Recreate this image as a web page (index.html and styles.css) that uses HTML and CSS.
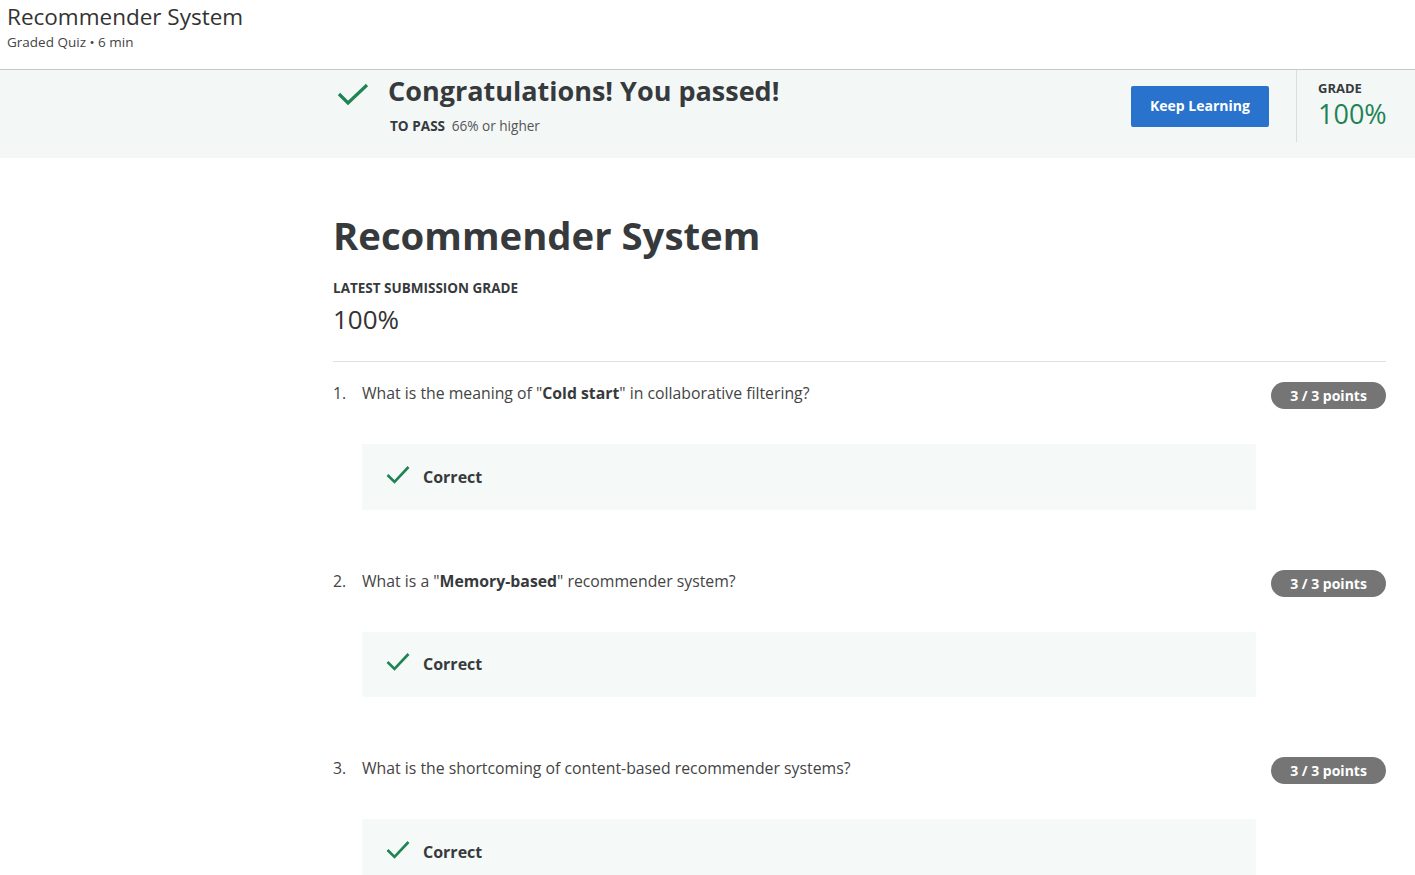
FILE: index.html
```html
<!DOCTYPE html>
<html>
<head>
<meta charset="utf-8">
<link rel="stylesheet" href="styles.css">
</head>
<body>
<header class="top">
  <div class="top-title">Recommender System</div>
  <div class="top-sub">Graded Quiz • 6 min</div>
</header>
<section class="banner">
  <div class="banner-main">
    <svg class="banner-check" viewBox="0 0 32 24" width="32" height="24"><path d="M2 12 L11 21 L30 3" fill="none" stroke="#1f8354" stroke-width="3.2"/></svg>
    <div class="banner-text">
      <div class="banner-title">Congratulations! You passed!</div>
      <div class="banner-pass"><b>TO PASS</b> 66% or higher</div>
    </div>
  </div>
  <button class="btn">Keep Learning</button>
  <div class="grade">
    <div class="grade-label">GRADE</div>
    <div class="grade-value">100%</div>
  </div>
</section>
<main class="content">
  <h1 class="title">Recommender System</h1>
  <div class="latest-label">LATEST SUBMISSION GRADE</div>
  <div class="latest-value">100%</div>
  <div class="rule"></div>

  <div class="question">
    <div class="q-row">
      <span class="q-num">1.</span>
      <span class="q-text">What is the meaning of "<b>Cold start</b>" in collaborative filtering?</span>
      <span class="pill">3 / 3 points</span>
    </div>
    <div class="correct">
      <svg viewBox="0 0 24 20" width="24" height="20"><path d="M1.5 10 L8.5 17 L22.5 2" fill="none" stroke="#1f8354" stroke-width="2.6"/></svg>
      <span>Correct</span>
    </div>
  </div>

  <div class="question">
    <div class="q-row">
      <span class="q-num">2.</span>
      <span class="q-text">What is a "<b>Memory-based</b>" recommender system?</span>
      <span class="pill">3 / 3 points</span>
    </div>
    <div class="correct">
      <svg viewBox="0 0 24 20" width="24" height="20"><path d="M1.5 10 L8.5 17 L22.5 2" fill="none" stroke="#1f8354" stroke-width="2.6"/></svg>
      <span>Correct</span>
    </div>
  </div>

  <div class="question">
    <div class="q-row">
      <span class="q-num">3.</span>
      <span class="q-text">What is the shortcoming of content-based recommender systems?</span>
      <span class="pill">3 / 3 points</span>
    </div>
    <div class="correct">
      <svg viewBox="0 0 24 20" width="24" height="20"><path d="M1.5 10 L8.5 17 L22.5 2" fill="none" stroke="#1f8354" stroke-width="2.6"/></svg>
      <span>Correct</span>
    </div>
  </div>
</main>
</body>
</html>
```

FILE: styles.css
```css
* { box-sizing: border-box; }
body {
  margin: 0;
  font-family: "Open Sans", "Liberation Sans", sans-serif;
  color: #373a3c;
  background: #fff;
  overflow: hidden;
  height: 875px;
}
.top {
  height: 70px;
  padding: 3px 7px 0;
  border-bottom: 1px solid #c8c8c8;
}
.top-title {
  font-size: 22.5px;
  line-height: 28px;
  color: #333;
}
.top-sub {
  font-size: 13.5px;
  line-height: 22px;
  color: #444;
}
.banner {
  height: 88px;
  background: #f3f8f7;
  display: flex;
  align-items: flex-start;
}
.banner-main {
  margin-left: 337px;
  flex: 1;
  display: flex;
  padding-top: 9px;
}
.banner-check { margin-top: 3px; }
.banner-text { margin-left: 19px; }
.banner-title {
  font-size: 27px;
  font-weight: 700;
  line-height: 20px;
  padding-top: 2px;
  color: #373a3c;
}
.banner-pass {
  font-size: 13.6px;
  margin-top: 15px;
  margin-left: 2px;
  color: #555;
}
.banner-pass b { color: #373a3c; margin-right: 3px; }
.btn {
  margin-top: 16px;
  width: 138px;
  height: 41px;
  background: #2a73cc;
  color: #fff;
  border: none;
  border-radius: 2px;
  font-family: inherit;
  font-weight: 700;
  font-size: 14px;
  line-height: 38px;
  padding: 0 0 2px;
}
.grade {
  margin-left: 27px;
  width: 119px;
  height: 72px;
  border-left: 1px solid #d9dede;
  padding: 9px 0 0 21px;
}
.grade-label {
  font-size: 13px;
  font-weight: 700;
  line-height: 18px;
}
.grade-value {
  font-size: 27px;
  line-height: 34px;
  color: #1f8354;
}
.content {
  margin-left: 333px;
  width: 1053px;
  padding-top: 52px;
}
.title {
  margin: 0;
  font-size: 38.3px;
  font-weight: 700;
  line-height: 50px;
}
.latest-label {
  margin-top: 18px;
  font-size: 13.5px;
  font-weight: 700;
  line-height: 20px;
}
.latest-value {
  margin-top: 5px;
  font-size: 26px;
  line-height: 32px;
  color: #333;
}
.rule {
  margin-top: 26px;
  border-top: 1px solid #e0e0e0;
}
.question { padding-top: 19px; height: 187.5px; }
.q-row {
  display: flex;
  align-items: flex-start;
  font-size: 15.8px;
  line-height: 24px;
}
.q-num { width: 29px; color: #444; }
.q-text { flex: 1; color: #444; }
.q-text b { color: #373a3c; }
.pill {
  margin-top: 1px;
  width: 115px;
  height: 27px;
  border-radius: 14px;
  background: #757575;
  color: #fff;
  font-size: 14px;
  font-weight: 700;
  text-align: center;
  line-height: 27px;
}
.correct {
  margin: 35px 0 0 29px;
  width: 894px;
  height: 65.5px;
  background: #f5f9f8;
  display: flex;
  align-items: center;
  padding-left: 24px;
  font-size: 16px;
  font-weight: 700;
}
.correct svg { margin-right: 13px; margin-top: -4px; }
```
